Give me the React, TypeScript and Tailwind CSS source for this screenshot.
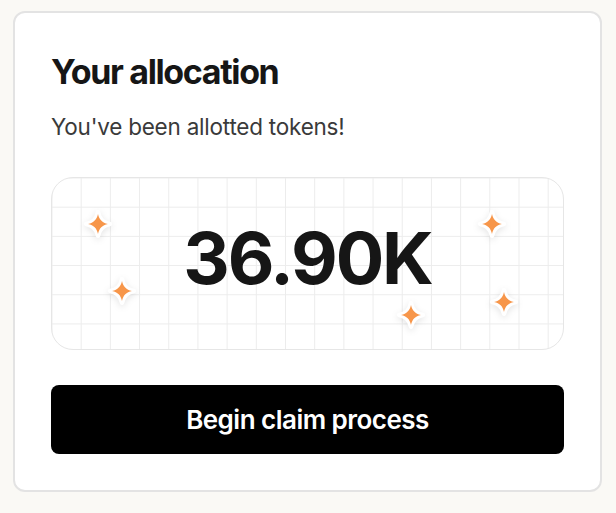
import React from "react";

const Sparkle = ({ className }: { className: string }) => (
  <svg
    viewBox="0 0 24 24"
    className={`absolute h-[28px] w-[28px] drop-shadow-[0_2px_3px_rgba(0,0,0,0.10)] ${className}`}
  >
    <path
      d="M12 2 C13 7.5 16.5 11 22 12 C16.5 13 13 16.5 12 22 C11 16.5 7.5 13 2 12 C7.5 11 11 7.5 12 2 Z"
      fill="#fff"
      stroke="#fff"
      strokeWidth="4"
      strokeLinejoin="round"
    />
    <path
      d="M12 3.5 C13 8.3 15.7 11 20.5 12 C15.7 13 13 15.7 12 20.5 C11 15.7 8.3 13 3.5 12 C8.3 11 11 8.3 12 3.5 Z"
      fill="#f7964a"
    />
  </svg>
);

export default function App() {
  return (
    <div className="min-h-[513px] w-[616px] bg-[#faf9f5] pl-[13px] pt-[11px] font-['Inter',sans-serif]">
      <div className="flex h-[481px] w-[589px] flex-col rounded-[12px] border-2 border-[#e3e3e3] bg-white px-[36px] pt-[39px]">
        <h1 className="text-[34px] font-bold leading-[40px] tracking-[-0.04em] text-[#161616]">
          Your allocation
        </h1>
        <p className="mt-[20px] text-[22.5px] leading-[30px] tracking-[-0.01em] text-[#3a3a3a]">
          You've been allotted tokens!
        </p>

        <div className="relative mt-[35px] flex h-[173px] items-center justify-center overflow-hidden rounded-[22px] border-[1.5px] border-[#e6e6e6] bg-white bg-[linear-gradient(to_right,#ececec_1px,transparent_1px),linear-gradient(to_bottom,#ececec_1px,transparent_1px)] bg-[size:29.2px_29.2px] bg-[position:-0.5px_-0.5px] pb-[11px]">
          <Sparkle className="left-[32px] top-[32px]" />
          <Sparkle className="left-[56px] top-[99px]" />
          <Sparkle className="left-[426px] top-[32px]" />
          <Sparkle className="left-[438px] top-[110px]" />
          <Sparkle className="left-[345px] top-[123px]" />
          <span className="text-[72px] font-bold leading-none tracking-[-0.03em] text-[#161616]">
            36.90K
          </span>
        </div>

        <button className="mt-[35px] h-[69px] w-full rounded-[8px] bg-black text-[26px] font-semibold tracking-[-0.02em] text-white">
          Begin claim process
        </button>
      </div>
    </div>
  );
}
